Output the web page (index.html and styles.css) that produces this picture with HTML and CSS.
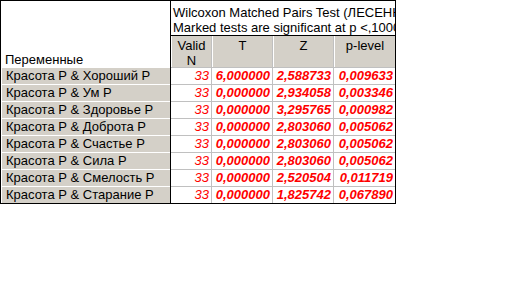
FILE: index.html
```html
<!DOCTYPE html>
<html>
<head>
<meta charset="utf-8">
<link rel="stylesheet" href="styles.css">
</head>
<body>
<div class="sheet">
  <div class="labels">
    <div class="corner">Переменные</div>
    <div class="lrow">Красота Р &amp; Хороший Р</div>
    <div class="lrow">Красота Р &amp; Ум Р</div>
    <div class="lrow">Красота Р &amp; Здоровье Р</div>
    <div class="lrow">Красота Р &amp; Доброта Р</div>
    <div class="lrow">Красота Р &amp; Счастье Р</div>
    <div class="lrow">Красота Р &amp; Сила Р</div>
    <div class="lrow">Красота Р &amp; Смелость Р</div>
    <div class="lrow">Красота Р &amp; Старание Р</div>
  </div>
  <div class="data">
    <div class="title">
      <div class="tline">Wilcoxon Matched Pairs Test (ЛЕСЕНКА)</div>
      <div class="tline">Marked tests are significant at p &lt;,10000</div>
    </div>
    <div class="grid">
      <div class="head">Valid<br>N</div>
      <div class="head">T</div>
      <div class="head">Z</div>
      <div class="head">p-level</div>

      <div class="cell n">33</div><div class="cell">6,000000</div><div class="cell">2,588733</div><div class="cell">0,009633</div>
      <div class="cell n">33</div><div class="cell">0,000000</div><div class="cell">2,934058</div><div class="cell">0,003346</div>
      <div class="cell n">33</div><div class="cell">0,000000</div><div class="cell">3,295765</div><div class="cell">0,000982</div>
      <div class="cell n">33</div><div class="cell">0,000000</div><div class="cell">2,803060</div><div class="cell">0,005062</div>
      <div class="cell n">33</div><div class="cell">0,000000</div><div class="cell">2,803060</div><div class="cell">0,005062</div>
      <div class="cell n">33</div><div class="cell">0,000000</div><div class="cell">2,803060</div><div class="cell">0,005062</div>
      <div class="cell n">33</div><div class="cell">0,000000</div><div class="cell">2,520504</div><div class="cell">0,011719</div>
      <div class="cell n">33</div><div class="cell">0,000000</div><div class="cell">1,825742</div><div class="cell">0,067890</div>
    </div>
  </div>
</div>
</body>
</html>
```
FILE: styles.css
```css
html, body {
  margin: 0;
  padding: 0;
  background: #fff;
}
body {
  font-family: "Liberation Sans", Arial, sans-serif;
  font-size: 13px;
  color: #000;
}
.sheet {
  display: flex;
  width: 394px;
  border: 1px solid #000;
}
.labels {
  width: 169px;
  border-right: 1px solid #000;
  flex: none;
}
.corner {
  height: 66px;
  display: flex;
  align-items: flex-end;
  padding-left: 4px;
  line-height: 15px;
  box-sizing: border-box;
  padding-bottom: 0;
}
.lrow {
  height: 16px;
  line-height: 16px;
  border-top: 1px solid #fff;
  border-left: 1px solid #fff;
  background: #d4d0c8;
  padding-left: 4px;
  white-space: nowrap;
}
.data {
  width: 224px;
  flex: none;
  overflow: hidden;
}
.title {
  height: 30px;
  padding-top: 4px;
  padding-left: 2px;
  border-bottom: 1px solid #000;
  white-space: nowrap;
  line-height: 15px;
}
.grid {
  display: grid;
  grid-template-columns: 40px 60px 60px 61px;
  grid-auto-rows: 16px;
  grid-template-rows: 31px;
  column-gap: 1px;
  row-gap: 1px;
  background: #c0c0c0;
}
.head {
  background: #d4d0c8;
  border-left: 1px solid #fff;
  text-align: center;
  line-height: 15px;
  padding-top: 2px;
  box-sizing: border-box;
}
.cell {
  background: #fff;
  color: #ff0000;
  font-style: italic;
  font-weight: bold;
  text-align: right;
  padding-right: 2px;
  line-height: 16px;
}
.cell.n {
  font-weight: normal;
}
```
